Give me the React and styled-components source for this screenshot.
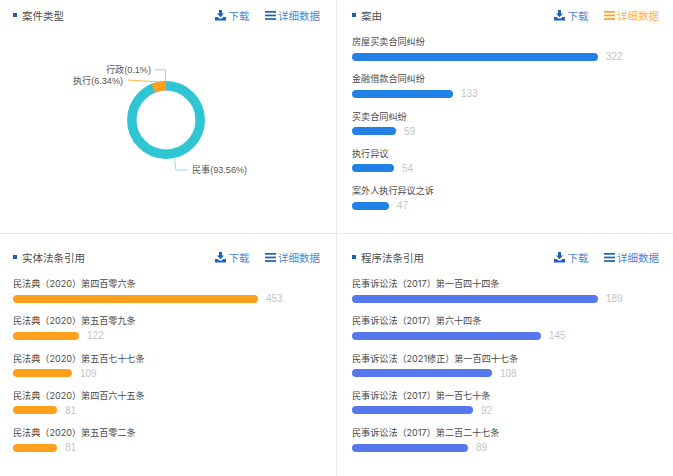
import React from 'react';
import styled, { createGlobalStyle } from 'styled-components';

const GlobalStyle = createGlobalStyle`
    html, body {
        margin:0;
        padding:0;
        background:#fff;
    }
    body {
        font-family:"Liberation Sans","Noto Sans CJK SC",sans-serif;
    }
`;

const Page = styled.div`
    display:grid;
    grid-template-columns:337px 336px;
    grid-template-rows:234px 242px;
    width:673px;
    height:476px;
    overflow:hidden;
`;

const Panel = styled.section`
    box-sizing:border-box;
    padding:${props => props.$top}px ${props => props.$right}px 0 ${props => props.$left}px;
    border-right:${props => props.$divider ? '1px solid #e9e9e9' : 'none'};
    border-bottom:${props => props.$rule ? '1px solid #e9e9e9' : 'none'};
`;

const Header = styled.header`
    display:flex;
    align-items:center;
    height:14px;
    margin-bottom:13px;
`;

const Title = styled.h3`
    display:flex;
    align-items:center;
    flex:1;
    margin:0;
    font-size:10.5px;
    font-weight:400;
    color:#4d4d4d;
    &::before {
        content:'';
        width:4px;
        height:4px;
        margin-right:5px;
        background:#1c5fb4;
    }
`;

const Action = styled.a`
    display:flex;
    align-items:center;
    gap:2.5px;
    margin-left:15px;
    font-size:10.5px;
    color:${props => props.$active ? '#ffb04d' : '#4a87d0'};
    svg {
        color:${props => props.$active ? '#ffa024' : '#1f62b5'};
    }
`;

const Row = styled.div`
    height:37.33px;
`;

const Label = styled.div`
    height:14px;
    margin-bottom:1.5px;
    font-family:Inter,"Noto Sans CJK SC",sans-serif;
    font-size:9.1px;
    line-height:14px;
    color:#4a4a4a;
    white-space:nowrap;
`;

const BarLine = styled.div`
    display:flex;
    align-items:center;
    gap:8px;
    height:12px;
`;

const Bar = styled.div`
    width:${props => props.$width}px;
    height:8px;
    border-radius:4px;
    background:${props => props.$color};
`;

const Count = styled.span`
    font-size:10px;
    color:#c4c4c4;
`;

const ChartSvg = styled.svg`
    display:block;
    width:336px;
    height:200px;
    margin:-13px 0 0 -13px;
    text {
        font-size:9.1px;
        fill:#555;
    }
`;

const DownloadIcon = () => (
    <svg width="11" height="11" viewBox="0 0 11 11" fill="currentColor">
        <path d="M4 0h3v3.6h2L5.5 7.2 2 3.6h2z" />
        <path d="M0 7h2.6l1.6 1.5h2.6L8.4 7H11v3.4H0z" />
    </svg>
);

const MenuIcon = () => (
    <svg width="11" height="9" viewBox="0 0 11 9" fill="currentColor">
        <rect y="0" width="11" height="1.7" />
        <rect y="3.6" width="11" height="1.7" />
        <rect y="7.2" width="11" height="1.7" />
    </svg>
);

const PanelHeader = ({title,active}) => (
    <Header>
        <Title>{title}</Title>
        <Action><DownloadIcon />下载</Action>
        <Action $active={active}><MenuIcon />详细数据</Action>
    </Header>
);

const BarList = ({items,color}) => (
    <>
        {items.map(item => (
            <Row key={item.name}>
                <Label>{item.name}</Label>
                <BarLine>
                    <Bar $width={item.width} $color={color} />
                    <Count>{item.count}</Count>
                </BarLine>
            </Row>
        ))}
    </>
);

// 环形图：圆心 (166,120)，外径 39，内径 29.5
const Donut = () => (
    <ChartSvg viewBox="0 0 336 200">
        <g transform="translate(0,-22)">
            <circle cx="166" cy="120" r="34.2" fill="none" stroke="#2fc5d3" strokeWidth="9.5" />
            <path d="M166 81A39 39 0 0 0 151.4 83.9L155 92.6A29.5 29.5 0 0 1 166 90.5Z" fill="#ff9f1c" />
            <path d="M155 69.8H165.5V81" fill="none" stroke="#b4bdf5" strokeWidth="1" />
            <path d="M128 80L160 82" fill="none" stroke="#ffb24f" strokeWidth="1" />
            <path d="M174.5 158.5L176 170H188" fill="none" stroke="#8ae0e8" strokeWidth="1" />
            <text x="151" y="73.2" textAnchor="end">行政(0.1%)</text>
            <text x="123" y="83.6" textAnchor="end">执行(6.34%)</text>
            <text x="192" y="173.2">民事(93.56%)</text>
        </g>
    </ChartSvg>
);

const causes = [
    {name:'房屋买卖合同纠纷',width:246,count:322},
    {name:'金融借款合同纠纷',width:101,count:133},
    {name:'买卖合同纠纷',width:44,count:59},
    {name:'执行异议',width:42,count:54},
    {name:'案外人执行异议之诉',width:37,count:47},
];

const lawArticles = [
    {name:'民法典（2020）第四百零六条',width:245,count:453},
    {name:'民法典（2020）第五百零九条',width:66,count:122},
    {name:'民法典（2020）第五百七十七条',width:59,count:109},
    {name:'民法典（2020）第四百六十五条',width:44,count:81},
    {name:'民法典（2020）第五百零二条',width:44,count:81},
];

const procedureArticles = [
    {name:'民事诉讼法（2017）第一百四十四条',width:246,count:189},
    {name:'民事诉讼法（2017）第六十四条',width:189,count:145},
    {name:'民事诉讼法（2021修正）第一百四十七条',width:140,count:108},
    {name:'民事诉讼法（2017）第一百七十条',width:121,count:92},
    {name:'民事诉讼法（2017）第二百二十七条',width:116,count:89},
];

const App = () => (
    <>
        <GlobalStyle />
        <Page>
            <Panel $top={8} $left={13} $right={16} $divider $rule>
                <PanelHeader title="案件类型" />
                <Donut />
            </Panel>
            <Panel $top={8} $left={15} $right={14} $rule>
                <PanelHeader title="案由" active />
                <BarList items={causes} color="#2181e6" />
            </Panel>
            <Panel $top={16} $left={13} $right={16} $divider>
                <PanelHeader title="实体法条引用" />
                <BarList items={lawArticles} color="#ff9f1c" />
            </Panel>
            <Panel $top={16} $left={15} $right={14}>
                <PanelHeader title="程序法条引用" />
                <BarList items={procedureArticles} color="#5678ee" />
            </Panel>
        </Page>
    </>
);

export default App;
